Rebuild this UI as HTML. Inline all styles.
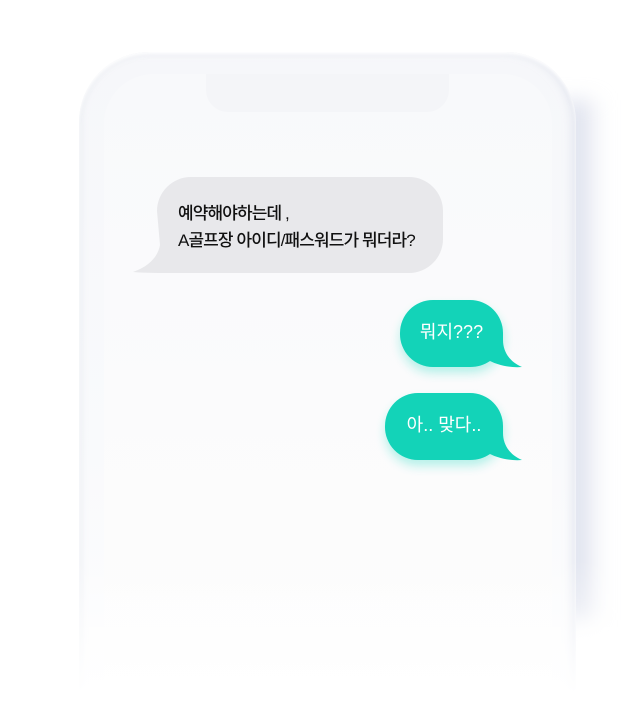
<!DOCTYPE html>
<html><head><meta charset="utf-8"><style>
html,body{margin:0;padding:0;background:#fff;width:631px;height:701px;overflow:hidden;position:relative;font-family:"Liberation Sans","Noto Sans CJK KR",sans-serif}
.shadow{position:absolute;left:550px;top:100px;width:50px;height:520px;background:linear-gradient(90deg,rgba(200,206,226,0) 0%,rgba(200,206,226,.7) 50%,rgba(225,229,240,.1) 100%);filter:blur(10px);}
.phone{position:absolute;left:79px;top:52px;width:497px;height:660px;border-radius:70px 70px 0 0;background:linear-gradient(180deg,#f6f7fa 0%,#f9fafc 60%,#fdfdfe 100%);box-shadow:inset 0 2px 3px #fff, inset -5px 0 8px rgba(215,220,233,.5), inset 3px 0 6px rgba(230,233,240,.5);}
.screen{position:absolute;left:104px;top:74px;width:448px;height:640px;border-radius:50px 50px 0 0;background:linear-gradient(180deg,#f8f9fb 0%,#fbfbfc 50%,#fdfdfd 100%);}
.notch{position:absolute;left:206px;top:74px;width:243px;height:38px;border-radius:0 0 22px 22px;background:#f4f5f8;}
.fade{position:absolute;left:60px;top:560px;width:571px;height:141px;background:linear-gradient(180deg,rgba(255,255,255,0),#fff 95%);}
.t{position:absolute;white-space:nowrap}
</style></head><body>
<div class="shadow"></div>
<div class="phone"></div>
<div class="screen"></div>
<div class="notch"></div>
<svg width="631" height="701" style="position:absolute;left:0;top:0">
<defs><filter id="g" x="-30%" y="-30%" width="160%" height="160%"><feGaussianBlur stdDeviation="5"/></filter></defs>
<path d="M191 177 H409 A34 34 0 0 1 443 211 V239 A34 34 0 0 1 409 273 H176 C160 273 145 273 133 272 C150 266 158 256 160 245 L157 211 A34 34 0 0 1 191 177Z" fill="#e8e8eb"/>
<g opacity=".3" filter="url(#g)"><rect x="400" y="306" width="104" height="67" rx="33" fill="#19d8bd"/><rect x="385" y="399" width="119" height="67" rx="33" fill="#19d8bd"/></g>
<path d="M433 300 H470 A33 33 0 0 1 503 333 V340 C503 352 510 362 522 367 C510 368 498 365 490 361 C484 365 478 367 470 367 H433 A33 33 0 0 1 400 333 A33 33 0 0 1 433 300Z" fill="#13d3b8"/>
<path d="M418 393 H470 A33 33 0 0 1 503 426 V433 C503 445 510 455 522 460 C510 461 498 458 490 454 C484 458 478 460 470 460 H418 A33 33 0 0 1 385 426 A33 33 0 0 1 418 393Z" fill="#13d3b8"/>
</svg>
<div class="fade"></div>
<div class="t" style="left:178px;top:200px;font-size:17px;line-height:27px;color:#111;font-weight:500;letter-spacing:-0.9px">예약해야하는데 ,<br>A골프장 아이디/패스워드가 뭐더라?</div>
<div class="t" style="left:400px;width:103px;top:321px;text-align:center;font-size:18px;line-height:22px;color:#fff">뭐지???</div>
<div class="t" style="left:385px;width:118px;top:414px;text-align:center;font-size:18px;line-height:22px;color:#fff">아.. 맞다..</div>
</body></html>
